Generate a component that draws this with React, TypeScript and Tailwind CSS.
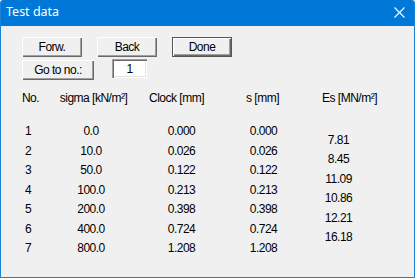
import React from "react";

const rows = [
  { no: "1", sigma: "0.0", clock: "0.000", s: "0.000" },
  { no: "2", sigma: "10.0", clock: "0.026", s: "0.026" },
  { no: "3", sigma: "50.0", clock: "0.122", s: "0.122" },
  { no: "4", sigma: "100.0", clock: "0.213", s: "0.213" },
  { no: "5", sigma: "200.0", clock: "0.398", s: "0.398" },
  { no: "6", sigma: "400.0", clock: "0.724", s: "0.724" },
  { no: "7", sigma: "800.0", clock: "1.208", s: "1.208" },
];

const es = ["7.81", "8.45", "11.09", "10.86", "12.21", "16.18"];

const raised =
  "shadow-[inset_1px_1px_0_#ffffff,inset_-1px_-1px_0_#696969,inset_-2px_-2px_0_#a0a0a0]";

const Btn = ({ label, w, def = false, className = "" }: { label: string; w: string; def?: boolean; className?: string }) => (
  <div
    className={`${w} h-[20px] flex items-center justify-center bg-[#f0f0f0] text-black ${
      def ? "border border-[#555555]" : ""
    } ${className}`}
  >
    <div className={`w-full h-full flex items-center justify-center ${raised}`}>{label}</div>
  </div>
);

export default function App() {
  return (
    <div className="w-[416px] h-[279px] bg-white font-['Liberation_Sans',Arial,sans-serif] text-[12px] tracking-[-0.5px] text-black">
      <div className="w-[415px] h-[278px] flex flex-col bg-[#f0f0f0] border-x border-b border-[#1883d7] rounded-t-[3px] overflow-hidden">
        {/* title bar */}
        <div className="h-[26px] shrink-0 bg-[#0078d7] flex items-center justify-between pl-[5px] pr-[9px]">
          <span className="text-white text-[12.5px] tracking-normal font-['Noto_Sans',sans-serif] pb-[1px]">Test data</span>
          <svg width="11" height="11" viewBox="0 0 11 11" className="mb-[2px]">
            <path d="M0.5 0.5 L10.5 10.5 M10.5 0.5 L0.5 10.5" stroke="#ffffff" strokeWidth="1.1" />
          </svg>
        </div>

        <div className="flex flex-col pt-[11px] pl-[21px]">
          <div className="flex gap-[15px]">
            <Btn label="Forw." w="w-[60px]" />
            <Btn label="Back" w="w-[60px]" />
            <Btn label="Done" w="w-[60px]" def />
          </div>
          <div className="flex items-start mt-[2px]">
            <Btn label="Go to no.:" w="w-[72px]" className="mt-[1px]" />
            <div className="ml-[18px] w-[35px] h-[19px] bg-white flex items-center justify-center shadow-[inset_1px_1px_0_#a0a0a0,inset_2px_2px_0_#696969,inset_-1px_-1px_0_#ffffff,inset_-2px_-2px_0_#e3e3e3]">
              1
            </div>
          </div>
        </div>

        {/* header */}
        <div className="flex mt-[12px] h-[13px] leading-[13px] whitespace-nowrap">
          <div className="w-[59px] flex justify-center">No.</div>
          <div className="w-[67px] flex justify-center">sigma [kN/m²]</div>
          <div className="w-[99px] flex justify-center">Clock [mm]</div>
          <div className="w-[73px] flex justify-center">s [mm]</div>
          <div className="w-[101px] flex justify-center">Es [MN/m²]</div>
        </div>

        {/* values */}
        <div className="flex mt-[17px]">
          <div className="w-[55px] pl-[24px] flex flex-col">
            {rows.map((r) => (
              <div key={r.no} className="h-[19.5px] leading-[19.5px]">{r.no}</div>
            ))}
          </div>
          <div className="w-[70px] flex flex-col text-center">
            {rows.map((r) => (
              <div key={r.no} className="h-[19.5px] leading-[19.5px]">{r.sigma}</div>
            ))}
          </div>
          <div className="w-[111px] flex flex-col text-center">
            {rows.map((r) => (
              <div key={r.no} className="h-[19.5px] leading-[19.5px]">{r.clock}</div>
            ))}
          </div>
          <div className="w-[53px] flex flex-col text-center">
            {rows.map((r) => (
              <div key={r.no} className="h-[19.5px] leading-[19.5px]">{r.s}</div>
            ))}
          </div>
          <div className="w-[97px] flex flex-col text-center pt-[8.5px]">
            {es.map((v) => (
              <div key={v} className="h-[19.5px] leading-[19.5px]">{v}</div>
            ))}
          </div>
        </div>
      </div>
    </div>
  );
}
